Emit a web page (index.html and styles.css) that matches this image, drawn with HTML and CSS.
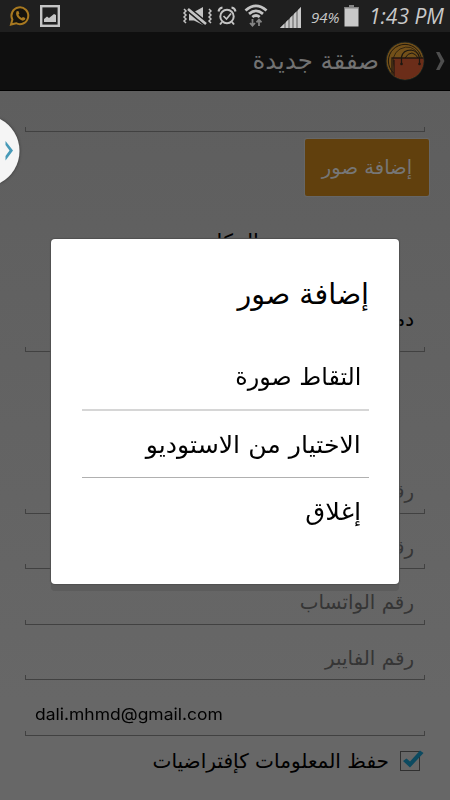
FILE: index.html
```
<!DOCTYPE html>
<html lang="ar" dir="rtl">
  <head>
    <meta charset="UTF-8" />
    <meta name="viewport" content="width=device-width, initial-scale=1.0" />
    <title>صفقة جديدة</title>
    <link rel="stylesheet" href="styles.css">
  </head>
  <body>
    <div class="status-bar" dir="ltr">
      <svg class="whatsapp" width="22" height="22" viewBox="0 0 22 22">
        <path d="M2 19.5 L3.4 14.6 A8.4 8.4 0 1 1 7 18.2 Z" fill="#15130d" stroke="#a87920" stroke-width="2" />
        <path d="M7.6 6.2 L9.4 6 L10.4 8.4 L9.4 9.8 Q10.6 12 12.7 13 L14 11.9 L16.3 13 L16.1 14.6 Q13.6 17 10 13.8 Q5.8 10 7.6 6.2 Z" fill="#a87920" />
      </svg>
      <svg class="picture" width="20" height="22" viewBox="0 0 20 22">
        <rect x="1.2" y="1.2" width="17.6" height="19.6" fill="#1f1f1f" stroke="#c4c4c4" stroke-width="2.4" />
        <path d="M4 17 V14 L7 11.5 L9 13 L14 9 L16 10 V17 Z" fill="#c4c4c4" />
      </svg>
      <div class="spacer"></div>
      <svg class="mute" width="30" height="20" viewBox="0 0 30 20">
        <path d="M2 2 L4 4 L2 6 L4 8 L2 10 L4 12 L2 14 L4 16 M27 2 L29 4 L27 6 L29 8 L27 10 L29 12 L27 14 L29 16" fill="none" stroke="#c4c4c4" stroke-width="1.5" />
        <path d="M7 5 H12 L21 0 V18 L12 13.5 H7 Z" fill="#c4c4c4" />
        <path d="M6 4.5 L23 18.5" stroke="#1f1f1f" stroke-width="2" />
        <path d="M8 1.5 L25 15.5" stroke="#1f1f1f" stroke-width="2" />
        <path d="M6 2 L24 17" stroke="#c4c4c4" stroke-width="2.6" />
      </svg>
      <svg class="alarm" width="20" height="20" viewBox="0 0 20 20">
        <g fill="none" stroke="#c4c4c4" stroke-width="2">
          <circle cx="10" cy="10.5" r="6.7" />
          <path d="M1.5 5.5 Q2 2 5.5 1.5 M14.5 1.5 Q18 2 18.5 5.5 M5 16 L3 18.5 M15 16 L17 18.5" />
          <path d="M6.5 10 L9.5 13 L14 7.5" stroke-width="1.7" />
        </g>
      </svg>
      <svg class="wifi" width="24" height="24" viewBox="0 0 24 24">
        <g fill="none" stroke="#c4c4c4" stroke-width="2.8">
          <path d="M1.5 6.5 Q12 -2.8 22.5 6.5" />
          <path d="M5 9.8 Q12 4 19 9.8" />
          <path d="M8.3 13 Q12 10 15.7 13" />
        </g>
        <path d="M8.5 15 V21 M6 19 L8.5 21.7 L11 19 M15 22 V16 M12.5 18.3 L15 15.5 L17.5 18.3" fill="none" stroke="#858585" stroke-width="1.8" />
      </svg>
      <svg class="signal" width="21" height="21" viewBox="0 0 21 21">
        <path d="M0 21 L21 0 V21 Z" fill="#929292" />
        <path d="M0 21 L4 17 V21 Z M6 21 V15 L8 13 V21 Z M10 21 V11 L12 9 V21 Z M14 21 V7 L16 5 V21 Z M18 21 V3 L21 0 V21 Z" fill="#c9c9c9" />
      </svg>
      <span class="percent">94%</span>
      <svg class="battery" width="15" height="22" viewBox="0 0 15 22">
        <rect x="5" y="0" width="5" height="3" fill="#858585" />
        <rect x="0.5" y="2" width="14" height="19.5" fill="#c9c9c9" />
        <rect x="0.5" y="2" width="14" height="1.5" fill="#858585" />
      </svg>
      <span class="clock">1:43 PM</span>
    </div>

    <div class="app-bar">
      <svg class="back" width="9" height="18" viewBox="0 0 9 18">
        <path d="M0 0 H3.5 L8.5 9 L3.5 18 H0 L4.5 9 Z" fill="#4e4e4e" />
      </svg>
      <svg class="logo" width="40" height="40" viewBox="0 0 40 40">
        <clipPath id="disc"><circle cx="20" cy="20" r="18.5" /></clipPath>
        <circle cx="20" cy="20" r="19" fill="#735019" stroke="#182020" stroke-width="1" />
        <g clip-path="url(#disc)">
          <circle cx="20" cy="20" r="16.6" fill="none" stroke="#20190d" stroke-width="1" />
          <path d="M10 28 Q5 14 15 8 Q27 2 34 14" fill="none" stroke="#352711" stroke-width="1" />
          <rect x="9" y="17" width="31" height="23" fill="#6b2d19" />
          <path d="M7 40 V17 H40 M9 40 V19" fill="none" stroke="#241611" stroke-width="1.3" />
          <path d="M16.5 23 V16 Q18 9 26 9 Q33 10 34.5 17 V23" fill="none" stroke="#1c1711" stroke-width="1.2" />
          <path d="M20 17 Q23 12 27 12 Q31 13 33 17" fill="none" stroke="#1c1711" stroke-width="1" />
        </g>
        <circle cx="16.5" cy="23" r="1.3" fill="#1c1711" />
        <circle cx="34.5" cy="23" r="1.3" fill="#1c1711" />
      </svg>
      <h1>صفقة جديدة</h1>
    </div>

    <form class="deal-form">
      <div class="field details"></div>
      <button type="button" class="add-photos">إضافة صور</button>
      <h2>المكان</h2>
      <div class="field city">دمشق</div>
      <div class="field phone">رقم</div>
      <div class="field">رقم</div>
      <div class="field">رقم الواتساب</div>
      <div class="field">رقم الفايبر</div>
      <div class="field email" dir="ltr"><span>dali.mhmd@gmail.com</span></div>
      <div class="remember">
        <svg width="26" height="24" viewBox="0 0 26 24">
          <rect x="2.5" y="2.5" width="19" height="19" fill="none" stroke="#303030" />
          <path d="M5 12 L8.5 9.5 L12 12.5 L22 1.5 L25.5 4 L12 18.5 Z" fill="#0c4a60" />
        </svg>
        <label>حفظ المعلومات كإفتراضيات</label>
      </div>
    </form>

    <svg class="side-handle" width="24" height="74" viewBox="0 0 24 74">
      <path d="M0 5 A36 36 0 0 1 0 69 Z" fill="#f5f5f5" />
      <path d="M5.5 27 L13 36.5 L5.5 46.5 V42 L9.5 36.5 L5.5 31 Z" fill="#479ab8" />
    </svg>

    <div class="dialog">
      <h3>إضافة صور</h3>
      <ul>
        <li><span class="take">التقاط صورة</span></li>
        <li><span class="pick">الاختيار من الاستوديو</span></li>
        <li><span class="close">إغلاق</span></li>
      </ul>
    </div>
  </body>
</html>
```
FILE: styles.css
```
* {
  margin: 0;
  padding: 0;
  box-sizing: border-box;
}
body {
  width: 450px;
  height: 800px;
  overflow: hidden;
  position: relative;
  background: linear-gradient(#5e5e5e 90px, #676767 700px);
  font-family: "DejaVu Sans", sans-serif;
  color: #000;
}
h1,
h2,
h3 {
  font-weight: normal;
}
span {
  display: inline-block;
  white-space: nowrap;
  transform-origin: right center;
}
.status-bar {
  display: flex;
  height: 32px;
  background: #1f1f1f;
  color: #c9c9c9;
  align-items: flex-start;
  padding: 0 5px 0 9px;
}
.status-bar svg {
  flex: none;
}
.whatsapp {
  margin-top: 5px;
}
.picture {
  margin: 5px 0 0 9px;
}
.spacer {
  flex: 1;
}
.mute {
  margin-top: 7px;
}
.alarm {
  margin: 6px 0 0 5px;
}
.wifi {
  margin: 4px 0 0 7px;
}
.signal {
  margin: 7px 0 0 12px;
}
.percent,
.clock {
  font-family: "Open Sans", sans-serif;
  font-style: italic;
}
.percent {
  width: 34px;
  margin-left: 10px;
  font-size: 15px;
  line-height: 34px;
}
.battery {
  margin: 5px 1px 0 -1px;
}
.clock {
  width: 76px;
  margin-left: 9px;
  font-size: 21px;
  line-height: 32px;
}
.app-bar {
  display: flex;
  align-items: center;
  height: 59px;
  padding: 0 5px 0 0;
  background: #0f0f0f;
  border-bottom: 1px solid #000;
  color: #727272;
}
.logo {
  margin: 0 11px 0 6px;
}
h1 {
  padding-bottom: 1px;
  font-size: 24.4px;
}
.deal-form {
  padding: 0 25px;
}
.field {
  position: relative;
  height: 55.5px;
  padding: 0 11px;
  line-height: 67px;
  font-size: 19.9px;
  color: #353535;
  border-bottom: 1.5px solid #414141;
}
.field::before,
.field::after {
  content: "";
  position: absolute;
  bottom: 0;
  left: 0;
  width: 1px;
  height: 4px;
  background: #414141;
}
.field::after {
  left: auto;
  right: 0;
}
.details {
  height: 41px;
}
.add-photos {
  display: block;
  width: 124px;
  height: 57px;
  margin: 7px -4px 0 0;
  border: none;
  border-radius: 2px;
  background: #61400d;
  box-shadow: 0 0 1px 1px #686868;
  color: #767676;
  font: 19.6px "DejaVu Sans", sans-serif;
}
h2 {
  height: 65px;
  padding: 34px 0 0 10px;
  text-align: center;
  font-size: 21px;
}
.city {
  height: 91px;
  padding-top: 25px;
  color: #000;
}
.phone {
  margin-top: 106px;
}
.email {
  color: #000;
  font-family: Inter, sans-serif;
  font-size: 16.5px;
  line-height: 69px;
  padding: 0 10px;
}
.email span {
  transform: scaleX(1.06);
  transform-origin: left center;
}
.remember {
  display: flex;
  align-items: center;
  height: 50px;
}
.remember svg {
  margin-right: 1px;
}
.remember label {
  margin-right: 9px;
  font-size: 20.1px;
}
.side-handle {
  position: absolute;
  left: 0;
  top: 114px;
  filter: drop-shadow(0 0 1.5px #333);
}
.dialog {
  position: absolute;
  left: 51px;
  top: 238.5px;
  width: 348px;
  height: 345.5px;
  padding: 27px 30px 0 31px;
  background: #fff;
  border-radius: 4px;
  box-shadow: 0 0 1px 1px #505050, 0 7px 0 #5c5c5c;
}
.dialog h3 {
  height: 77.5px;
  font-size: 28.5px;
  line-height: 58px;
}
.dialog ul {
  list-style: none;
}
.dialog li {
  height: 67.5px;
  padding-right: 8px;
  font-size: 24px;
  line-height: 69px;
  border-bottom: 1px solid #b0b0b0;
}
.dialog li:first-child {
  border-bottom: 2px solid #d6d6d6;
}
.dialog li:last-child {
  border: none;
}
.take {
  transform: scaleX(0.99);
}
.pick {
  transform: scaleX(1.05);
}
.close {
  transform: scaleX(1.07);
}
```
